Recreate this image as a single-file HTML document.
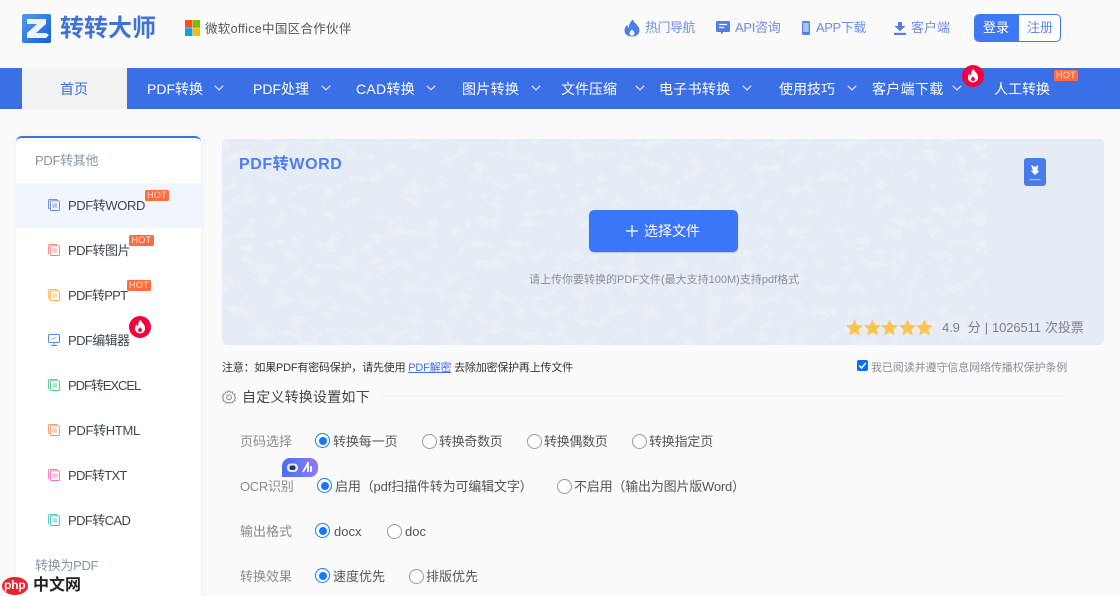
<!DOCTYPE html>
<html lang="zh-CN"><head><meta charset="utf-8"><title>PDF转WORD</title>
<style>
*{box-sizing:border-box}
html,body{margin:0;padding:0;width:1120px;height:596px;overflow:hidden;background:#fafafa}
body{position:relative;font-family:"Liberation Sans","Noto Sans CJK SC",sans-serif;font-size:13px;color:#444}
.t{position:absolute;white-space:nowrap;line-height:20px;height:20px}
.b{position:absolute}
.nav{font-size:14px;color:#fff}
.top{color:#6f8ee6;font-size:13px}
.side{color:#3f4650;font-size:13px;letter-spacing:-.3px;left:68px}
.hot{position:absolute;height:11px;background:#ff6d3f;color:#fde3d8;font-size:9px;line-height:11px;text-align:center;border-radius:1.5px;letter-spacing:.3px}
.lab{left:240px;color:#8b8b8b}
.opt{color:#555}
.r{position:absolute;width:15px;height:15px;border-radius:50%;border:1px solid #999;background:#fff}
.r.on{border-color:#1b7bf5}
.r.on:after{content:"";position:absolute;left:2.5px;top:2.5px;width:8px;height:8px;border-radius:50%;background:#1677ff}
svg{position:absolute;display:block}
</style></head><body>
<svg width="0" height="0" style="left:0;top:0"><defs>
<symbol id="doc" viewBox="0 0 12 12"><path d="M9 1.3V1a.6.6 0 0 0-.6-.6H1.6A1 1 0 0 0 .6 1.4v7.8c0 .5.3.8.8.8" fill="none" stroke="currentColor" stroke-width=".9"/><rect x="2.4" y="1.8" width="9" height="9.7" rx="1" fill="#fff" fill-opacity=".5" stroke="currentColor" stroke-width=".9"/><rect x="4.4" y="4.2" width="5" height="4.6" fill="currentColor" opacity=".45"/></symbol>
<symbol id="fire" viewBox="0 0 22 22"><circle cx="11" cy="11" r="11" fill="#f5003d"/><path d="M11.5 3.8c.6 2.6 4.6 4.4 4.6 8.6 0 3-2.3 5-5.1 5s-5.1-2-5.1-4.9c0-2 1-3.400 2-4.300 0 1.300.5 2 1.200 2.300C8.800 8 9.700 5.500 11.500 3.800z" fill="#fff"/><path d="M11 11c.4 1.200 1.900 1.700 1.900 3.300 0 1.100-.9 1.900-1.900 1.900s-1.900-.8-1.900-1.900c0-1.400 1.400-2 1.900-3.300z" fill="#f5003d"/></symbol>
<symbol id="chev" viewBox="0 0 10 6"><path d="M.8.8 5 4.800 9.200.8" fill="none" stroke="#dfe8fb" stroke-width="1.200"/></symbol>
<symbol id="star" viewBox="0 0 20 19"><path d="M10 0l2.900 6.400 6.900.8-5.100 4.700 1.400 6.900L10 15.300 3.900 18.800l1.400-6.900L.2 7.200l6.900-.8z" fill="#fcc34f"/></symbol>
</defs></svg>

<!-- logo -->
<div class="b" style="left:22px;top:14px;width:29px;height:29px;border-radius:2px;background:linear-gradient(135deg,#4f9bf0,#1560d8)"></div>
<svg style="left:22px;top:14px" width="29" height="29" viewBox="0 0 29 29"><path d="M5 5h19v5l-10 9h10l3 2-3 3H5v-5l10-9H5z" fill="#eef1f6"/></svg>
<div class="t" style="left:60px;top:14px;height:30px;line-height:30px;font-size:24px;font-weight:700;color:#3f74d6">转转大师</div>
<svg style="left:185px;top:20px" width="15" height="16" viewBox="0 0 15 16"><rect width="7.300" height="7.800" fill="#f25022"/><rect x="7.700" width="7.300" height="7.800" fill="#7fba00"/><rect y="8.200" width="7.300" height="7.800" fill="#00a4ef"/><rect x="7.700" y="8.200" width="7.300" height="7.800" fill="#ffb900"/></svg>
<div class="t" style="left:205px;top:19px;font-size:12.500px;letter-spacing:.3px;color:#555">微软office中国区合作伙伴</div>

<!-- top links -->
<svg style="left:624px;top:19px" width="16" height="18" viewBox="0 0 16 18"><path d="M9 .5c.6 3.600 6.500 6 6.500 11 0 3.500-3 6-7.500 6s-7.500-2.500-7.500-6c0-2.700 1.500-4.500 3-5.700 0 1.700.6 2.700 1.500 3.200C4.500 5.500 6.500 2.500 9 .5z" fill="#4d7fe8"/><path d="M8 10c.4 1.500 2.400 2.300 2.400 4.300 0 1.500-1.100 2.500-2.400 2.500s-2.400-1-2.400-2.500c0-1.900 1.800-2.700 2.400-4.300z" fill="#fafafa"/></svg>
<div class="t top" style="left:645px;top:18px;letter-spacing:-.5px">热门导航</div>
<svg style="left:716px;top:21px" width="14" height="14" viewBox="0 0 14 14"><path d="M1.500 0h11A1.500 1.500 0 0 1 14 1.500v8a1.500 1.500 0 0 1-1.500 1.500H7.500L5 13.500V11H1.500A1.500 1.500 0 0 1 0 9.500v-8A1.500 1.500 0 0 1 1.500 0z" fill="#4d7fe8"/><path d="M3 3.500h8M3 6.500h5" stroke="#fff" stroke-width="1.200"/></svg>
<div class="t top" style="left:735px;top:18px;letter-spacing:-.3px">API咨询</div>
<svg style="left:802px;top:21px" width="8" height="14" viewBox="0 0 8 14"><rect width="8" height="14" rx="1.500" fill="#4d7fe8"/><rect x="1.200" y="1.800" width="5.600" height="9.200" fill="#a9c1f3"/></svg>
<div class="t top" style="left:816px;top:18px;letter-spacing:-.4px">APP下载</div>
<svg style="left:894px;top:22px" width="12" height="13" viewBox="0 0 12 13"><path d="M4 0h4v4h3.500L6 9.300.5 4H4z" fill="#4d7fe8"/><rect y="10.800" width="12" height="2.200" fill="#4d7fe8"/></svg>
<div class="t top" style="left:911px;top:18px">客户端</div>
<div class="b" style="left:974px;top:14px;width:87px;height:28px;border:1px solid #3d78f5;border-radius:5px;background:#fff;overflow:hidden"><div style="width:44px;height:28px;background:#3d78f5"></div></div>
<div class="t" style="left:983px;top:18px;color:#fff">登录</div>
<div class="t" style="left:1027px;top:18px;color:#5f86ea">注册</div>

<!-- nav -->
<div class="b" style="left:0;top:68px;width:1120px;height:41px;background:#3b6fe6"></div>
<div class="b" style="left:22px;top:68px;width:105px;height:41px;background:#f2f2f2"></div>
<div class="t nav" style="left:60px;top:79px;color:#3b6fd8">首页</div>
<div class="t nav" style="left:147px;top:79px">PDF转换</div><svg style="left:214px;top:85px" width="10" height="6"><use href="#chev"/></svg>
<div class="t nav" style="left:253px;top:79px">PDF处理</div><svg style="left:321px;top:85px" width="10" height="6"><use href="#chev"/></svg>
<div class="t nav" style="left:356px;top:79px;letter-spacing:.3px">CAD转换</div><svg style="left:426px;top:85px" width="10" height="6"><use href="#chev"/></svg>
<div class="t nav" style="left:462px;top:79px;letter-spacing:.3px">图片转换</div><svg style="left:531px;top:85px" width="10" height="6"><use href="#chev"/></svg>
<div class="t nav" style="left:561px;top:79px">文件压缩</div><svg style="left:635px;top:85px" width="10" height="6"><use href="#chev"/></svg>
<div class="t nav" style="left:659px;top:79px;letter-spacing:.3px">电子书转换</div><svg style="left:742px;top:85px" width="10" height="6"><use href="#chev"/></svg>
<div class="t nav" style="left:779px;top:79px">使用技巧</div><svg style="left:847px;top:85px" width="10" height="6"><use href="#chev"/></svg>
<div class="t nav" style="left:872px;top:79px;letter-spacing:.3px">客户端下载</div><svg style="left:952px;top:85px" width="10" height="6"><use href="#chev"/></svg>
<svg style="left:962px;top:65px" width="22" height="22"><use href="#fire"/></svg>
<div class="t nav" style="left:994px;top:79px">人工转换</div>
<div class="hot" style="left:1054px;top:70px;width:24px">HOT</div>

<!-- sidebar -->
<div class="b" style="left:16px;top:136px;width:185px;height:470px;background:#fff;border-top:2px solid #3b6fe6;border-radius:6px 6px 0 0;box-shadow:0 0 8px rgba(0,0,0,.05)"></div>
<div class="t" style="left:35px;top:151px;color:#8a93a5;letter-spacing:-.3px">PDF转其他</div>
<div class="b" style="left:16px;top:183px;width:185px;height:45px;background:#f2f5fd"></div>
<svg style="left:48px;top:199px;color:#5d86e8" width="12" height="12"><use href="#doc"/></svg>
<div class="t side" style="top:196px;letter-spacing:-.4px">PDF转WORD</div><div class="hot" style="left:145px;top:190px;width:24px">HOT</div>
<svg style="left:48px;top:244px;color:#f08080" width="12" height="12"><use href="#doc"/></svg>
<div class="t side" style="top:241px;letter-spacing:-.5px">PDF转图片</div><div class="hot" style="left:129px;top:235px;width:25px">HOT</div>
<svg style="left:48px;top:289px;color:#f7b54a" width="12" height="12"><use href="#doc"/></svg>
<div class="t side" style="top:286px;letter-spacing:-.7px">PDF转PPT</div><div class="hot" style="left:127px;top:280px;width:24px">HOT</div>
<svg style="left:48px;top:334px" width="12" height="12" viewBox="0 0 12 12"><rect x=".5" y=".5" width="11" height="8" rx="1" fill="none" stroke="#5d86e8"/><path d="M6 8.500v2.500M3 11.500h6" stroke="#5d86e8"/><path d="M3.500 6l2-2 1 1 2-2" fill="none" stroke="#9db6ef" stroke-width=".8"/></svg>
<div class="t side" style="top:331px;letter-spacing:-.6px">PDF编辑器</div>
<svg style="left:129px;top:316px" width="22" height="22"><use href="#fire"/></svg>
<svg style="left:48px;top:379px;color:#4cc98e" width="12" height="12"><use href="#doc"/></svg>
<div class="t side" style="top:376px;letter-spacing:-1.050px">PDF转EXCEL</div>
<svg style="left:48px;top:424px;color:#f59263" width="12" height="12"><use href="#doc"/></svg>
<div class="t side" style="top:421px">PDF转HTML</div>
<svg style="left:48px;top:469px;color:#fb6fb8" width="12" height="12"><use href="#doc"/></svg>
<div class="t side" style="top:466px;letter-spacing:-.7px">PDF转TXT</div>
<svg style="left:48px;top:514px;color:#43c2c4" width="12" height="12"><use href="#doc"/></svg>
<div class="t side" style="top:511px;letter-spacing:-.6px">PDF转CAD</div>
<div class="t" style="left:35px;top:556px;color:#8a93a5;letter-spacing:-.3px">转换为PDF</div>

<!-- hero -->
<div class="b" style="left:222px;top:139px;width:882px;height:206px;background:#e6ecf5;border-radius:5px;overflow:hidden">
<svg style="left:0;top:0" width="882" height="206" viewBox="0 0 882 206"><defs><filter id="gr" x="0" y="0" width="100%" height="100%"><feTurbulence type="fractalNoise" baseFrequency=".06 .09" numOctaves="3" seed="11"/><feColorMatrix type="matrix" values="0 0 0 0 .878  0 0 0 0 .906  0 0 0 0 .949  6 0 0 0 -3.300"/></filter></defs><rect x="0" y="0" width="765" height="206" filter="url(#gr)" opacity=".45"/></svg>
</div>
<div class="t" style="left:239px;top:155px;font-size:16px;font-weight:700;color:#4d7df0;letter-spacing:.6px">PDF转WORD</div>
<div class="b" style="left:1024px;top:158px;width:22px;height:28px;background:#4a7bea;border-radius:3px"></div>
<svg style="left:1024px;top:158px" width="22" height="28" viewBox="0 0 22 28"><path d="M7 7l4 2 3-2-.500 6 2 0-4.500 4-4.500-4.500 2.500.200z" fill="#fff"/><rect x="5.500" y="21" width="11" height="1.200" fill="#a9c1f3"/></svg>
<div class="b" style="left:589px;top:210px;width:149px;height:42px;background:#3c76f8;border-radius:5px;box-shadow:0 1px 1px rgba(60,80,140,.25)"></div>
<svg style="left:626px;top:225px" width="12" height="12"><path d="M6 0v12M0 6h12" stroke="#e6edff" stroke-width="1.500"/></svg>
<div class="t" style="left:644px;top:221px;font-size:14px;color:#fff">选择文件</div>
<div class="t" style="left:529px;top:270px;font-size:11px;color:#8b8f98">请上传你要转换的PDF文件(最大支持100M)支持pdf格式</div>
<svg style="left:846px;top:319px" width="17" height="17"><use href="#star"/></svg>
<svg style="left:864px;top:319px" width="17" height="17"><use href="#star"/></svg>
<svg style="left:881px;top:319px" width="17" height="17"><use href="#star"/></svg>
<svg style="left:899px;top:319px" width="17" height="17"><use href="#star"/></svg>
<svg style="left:916px;top:319px" width="17" height="17"><use href="#star"/></svg>
<div class="t" style="left:942px;top:318px;font-size:13px;color:#7d8088;letter-spacing:-.1px;word-spacing:.5px">4.9&nbsp;&nbsp;分 | 1026511 次投票</div>

<!-- notices -->
<div class="t" style="left:222px;top:358px;font-size:11px;color:#333;letter-spacing:-.2px">注意：如果PDF有密码保护，请先使用 <span style="color:#3f6ff0;text-decoration:underline">PDF解密</span> 去除加密保护再上传文件</div>
<div class="b" style="left:857px;top:360px;width:11px;height:11px;border-radius:2px;background:#0a6ff0"></div>
<svg style="left:857px;top:360px" width="11" height="11"><path d="M2.200 5.500 4.600 8l4.200-5" fill="none" stroke="#fff" stroke-width="1.500"/></svg>
<div class="t" style="left:871px;top:358px;font-size:11px;color:#8a8d96;letter-spacing:-.1px">我已阅读并遵守信息网络传播权保护条例</div>

<!-- settings -->
<svg style="left:222px;top:390px" width="14" height="14" viewBox="0 0 14 14"><path d="M7 .7 8.300 2.200 10.300 1.900 11 3.800 13 4.500 12.600 6.500 13.800 7.500 12.600 9 13 11 11 11.300 10 13 8.200 12.400 7 13.300 5.800 12.400 4 13 3 11.300 1 11 1.400 9 .2 7.500 1.400 6.500 1 4.500 3 3.800 3.700 1.900 5.700 2.200z" fill="none" stroke="#8c8c8c"/><circle cx="7" cy="7.300" r="2.400" fill="none" stroke="#8c8c8c"/></svg>
<div class="t" style="left:242px;top:387px;font-size:14px;letter-spacing:.2px;color:#444">自定义转换设置如下</div>
<div class="b" style="left:382px;top:396px;width:682px;height:1px;background:#eeeeee"></div>

<div class="t lab" style="top:432px">页码选择</div>
<div class="r on" style="left:315px;top:433px"></div><div class="t opt" style="left:333px;top:432px;letter-spacing:-.1px">转换每一页</div>
<div class="r" style="left:422px;top:434px"></div><div class="t opt" style="left:439px;top:432px;letter-spacing:-.3px">转换奇数页</div>
<div class="r" style="left:527px;top:434px"></div><div class="t opt" style="left:544px;top:432px;letter-spacing:-.3px">转换偶数页</div>
<div class="r" style="left:632px;top:434px"></div><div class="t opt" style="left:649px;top:432px;letter-spacing:-.2px">转换指定页</div>

<div class="b" style="left:282px;top:458px;width:36px;height:19px;border-radius:8px 8px 8px 0;background:linear-gradient(90deg,#4a6ef0,#8f7bfa)"></div>
<svg style="left:287px;top:462px" width="28" height="12" viewBox="0 0 28 12"><rect x="0" y="1.500" width="11" height="8.500" rx="4" fill="#e8ecfb"/><rect x="2.500" y="3.500" width="6" height="4.500" rx="2" fill="#2c3560"/><path d="M16 10 21 1v9M24 4v6" fill="none" stroke="#fff" stroke-width="1.800"/></svg>
<div class="t lab" style="top:477px;letter-spacing:-.3px">OCR识别</div>
<div class="r on" style="left:317px;top:478px"></div><div class="t opt" style="left:335px;top:477px;letter-spacing:-.15px">启用（pdf扫描件转为可编辑文字）</div>
<div class="r" style="left:557px;top:479px"></div><div class="t opt" style="left:574px;top:477px;letter-spacing:-.2px">不启用（输出为图片版Word）</div>

<div class="t lab" style="top:522px">输出格式</div>
<div class="r on" style="left:315px;top:523px"></div><div class="t opt" style="left:334px;top:522px">docx</div>
<div class="r" style="left:387px;top:524px"></div><div class="t opt" style="left:405px;top:522px">doc</div>

<div class="t lab" style="top:567px">转换效果</div>
<div class="r on" style="left:315px;top:568px"></div><div class="t opt" style="left:333px;top:567px">速度优先</div>
<div class="r" style="left:409px;top:569px"></div><div class="t opt" style="left:426px;top:567px">排版优先</div>

<!-- php watermark -->
<div class="b" style="left:2px;top:577px;width:26px;height:18px;border-radius:50%;background:#f0202c"></div>
<div class="t" style="left:4px;top:575px;font-size:12px;font-weight:700;color:#fff;letter-spacing:-.2px">php</div>
<div class="t" style="left:33px;top:576px;font-size:16px;font-weight:700;color:#222">中文网</div>
</body></html>
